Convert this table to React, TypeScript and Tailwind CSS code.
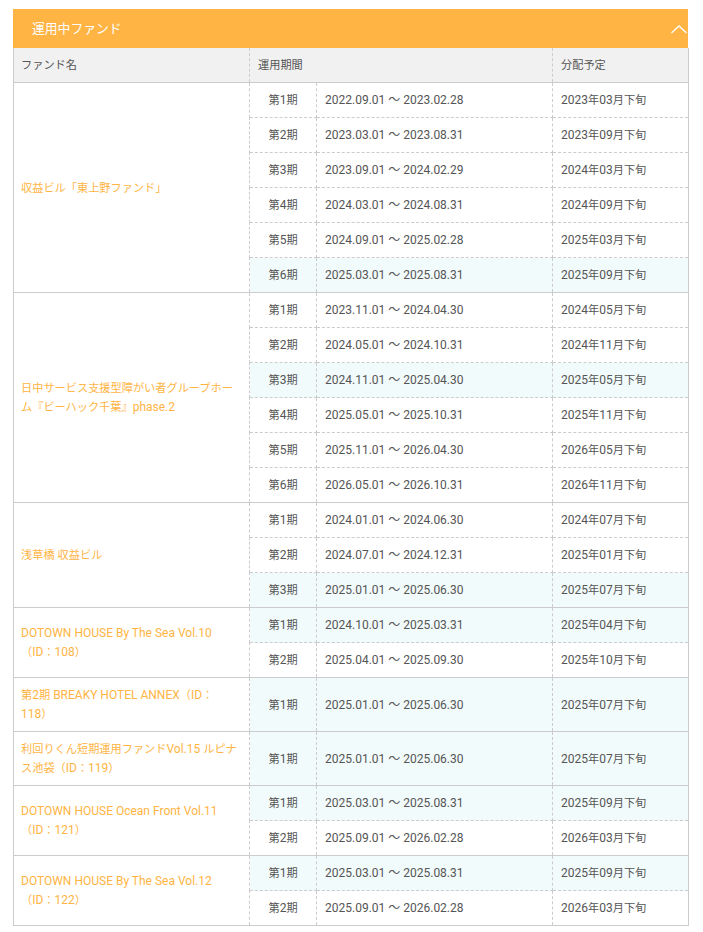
import React from "react";

type Period = { term: string; range: string; payout: string; active?: boolean };
type Fund = { name: string; periods: Period[] };

const funds: Fund[] = [
    {
        name: "収益ビル「東上野ファンド」",
        periods: [
            { term: "第1期", range: "2022.09.01 ～ 2023.02.28", payout: "2023年03月下旬" },
            { term: "第2期", range: "2023.03.01 ～ 2023.08.31", payout: "2023年09月下旬" },
            { term: "第3期", range: "2023.09.01 ～ 2024.02.29", payout: "2024年03月下旬" },
            { term: "第4期", range: "2024.03.01 ～ 2024.08.31", payout: "2024年09月下旬" },
            { term: "第5期", range: "2024.09.01 ～ 2025.02.28", payout: "2025年03月下旬" },
            { term: "第6期", range: "2025.03.01 ～ 2025.08.31", payout: "2025年09月下旬", active: true },
        ],
    },
    {
        name: "日中サービス支援型障がい者グループホーム『ビーハック千葉』phase.2",
        periods: [
            { term: "第1期", range: "2023.11.01 ～ 2024.04.30", payout: "2024年05月下旬" },
            { term: "第2期", range: "2024.05.01 ～ 2024.10.31", payout: "2024年11月下旬" },
            { term: "第3期", range: "2024.11.01 ～ 2025.04.30", payout: "2025年05月下旬", active: true },
            { term: "第4期", range: "2025.05.01 ～ 2025.10.31", payout: "2025年11月下旬" },
            { term: "第5期", range: "2025.11.01 ～ 2026.04.30", payout: "2026年05月下旬" },
            { term: "第6期", range: "2026.05.01 ～ 2026.10.31", payout: "2026年11月下旬" },
        ],
    },
    {
        name: "浅草橋 収益ビル",
        periods: [
            { term: "第1期", range: "2024.01.01 ～ 2024.06.30", payout: "2024年07月下旬" },
            { term: "第2期", range: "2024.07.01 ～ 2024.12.31", payout: "2025年01月下旬" },
            { term: "第3期", range: "2025.01.01 ～ 2025.06.30", payout: "2025年07月下旬", active: true },
        ],
    },
    {
        name: "DOTOWN HOUSE By The Sea Vol.10（ID：108）",
        periods: [
            { term: "第1期", range: "2024.10.01 ～ 2025.03.31", payout: "2025年04月下旬", active: true },
            { term: "第2期", range: "2025.04.01 ～ 2025.09.30", payout: "2025年10月下旬" },
        ],
    },
    {
        name: "第2期 BREAKY HOTEL ANNEX（ID：118）",
        periods: [
            { term: "第1期", range: "2025.01.01 ～ 2025.06.30", payout: "2025年07月下旬", active: true },
        ],
    },
    {
        name: "利回りくん短期運用ファンドVol.15 ルピナス池袋（ID：119）",
        periods: [
            { term: "第1期", range: "2025.01.01 ～ 2025.06.30", payout: "2025年07月下旬", active: true },
        ],
    },
    {
        name: "DOTOWN HOUSE Ocean Front Vol.11（ID：121）",
        periods: [
            { term: "第1期", range: "2025.03.01 ～ 2025.08.31", payout: "2025年09月下旬", active: true },
            { term: "第2期", range: "2025.09.01 ～ 2026.02.28", payout: "2026年03月下旬" },
        ],
    },
    {
        name: "DOTOWN HOUSE By The Sea Vol.12（ID：122）",
        periods: [
            { term: "第1期", range: "2025.03.01 ～ 2025.08.31", payout: "2025年09月下旬", active: true },
            { term: "第2期", range: "2025.09.01 ～ 2026.02.28", payout: "2026年03月下旬" },
        ],
    },
];

// the Japanese glyphs in the original run narrower than Noto's, so shrink the CJK runs a bit
const CJK = /([\u3000-\u30ff\u4e00-\u9fff\uff01-\uff60]+)/;

const Jp = ({ text, big }: { text: string; big?: boolean }) => (
    <>
        {text.split(CJK).map((part, i) =>
            CJK.test(part) ? (
                <span key={i} className={big ? "text-[12.8px]" : "text-[11.2px]"}>{part}</span>
            ) : (
                <React.Fragment key={i}>{part}</React.Fragment>
            )
        )}
    </>
);

const cell = "border border-dashed border-[#cccccc] pt-2 pb-[7px] leading-[19px] align-middle";

const App = () => {
    return (
        <div className="bg-white min-h-[932px] pt-[9px] pl-[13px] font-['Roboto','Noto_Sans_CJK_JP',sans-serif] text-[12px] text-[#555555]">
            <div className="w-[675px]">
                {/* title bar */}
                <div className="flex items-center justify-between h-[39px] bg-[#ffb444] pl-[19px] pr-[1px] overflow-hidden">
                    <span className="text-[14px] text-white"><Jp text="運用中ファンド" big /></span>
                    <svg width="16" height="9" viewBox="0 0 16 9" className="mt-[2px]">
                        <polyline points="0.5,8 8,1 15.5,8" fill="none" stroke="#ffffff" strokeWidth="1.3" />
                    </svg>
                </div>

                <table className="w-[675px] border-collapse table-fixed">
                    <colgroup>
                        <col className="w-[236px]" />
                        <col className="w-[67px]" />
                        <col className="w-[236px]" />
                        <col className="w-[136px]" />
                    </colgroup>
                    <thead>
                        <tr className="bg-[#f1f1f1]">
                            <th className="border-l border-r border-b border-[#cccccc] text-left font-normal px-[7px] pt-2 pb-[7px] leading-[19px]" style={{ borderStyle: "solid dashed solid solid" }}><Jp text="ファンド名" /></th>
                            <th colSpan={2} className="border-r border-b border-[#cccccc] text-left font-normal px-[8px] pt-2 pb-[7px] leading-[19px]" style={{ borderStyle: "solid dashed solid solid" }}><Jp text="運用期間" /></th>
                            <th className="border-r border-b border-[#cccccc] border-solid text-left font-normal px-[8px] pt-2 pb-[7px] leading-[19px]"><Jp text="分配予定" /></th>
                        </tr>
                    </thead>
                    <tbody>
                        {funds.map((fund) =>
                            fund.periods.map((p, i) => {
                                const last = i === fund.periods.length - 1;
                                const bottom = last ? "solid" : "dashed";
                                const bg = p.active ? "bg-[#f2fbfb]" : "";
                                return (
                                    <tr key={fund.name + p.term}>
                                        {i === 0 && (
                                            <td
                                                rowSpan={fund.periods.length}
                                                className="border border-[#cccccc] border-solid bg-white px-[7px] pt-2 pb-[7px] leading-[19px] align-middle text-[#ffb444]"
                                                style={{ borderRightStyle: "dashed" }}
                                            >
                                                <Jp text={fund.name} />
                                            </td>
                                        )}
                                        <td className={`${cell} ${bg} text-center`} style={{ borderBottomStyle: bottom }}>
                                            <Jp text={p.term} />
                                        </td>
                                        <td className={`${cell} ${bg} px-[8px]`} style={{ borderBottomStyle: bottom }}>
                                            {p.range}
                                        </td>
                                        <td
                                            className={`${cell} ${bg} px-[8px]`}
                                            style={{ borderBottomStyle: bottom, borderRightStyle: "solid" }}
                                        >
                                            <Jp text={p.payout} />
                                        </td>
                                    </tr>
                                );
                            })
                        )}
                    </tbody>
                </table>
            </div>
        </div>
    );
};

export default App;
